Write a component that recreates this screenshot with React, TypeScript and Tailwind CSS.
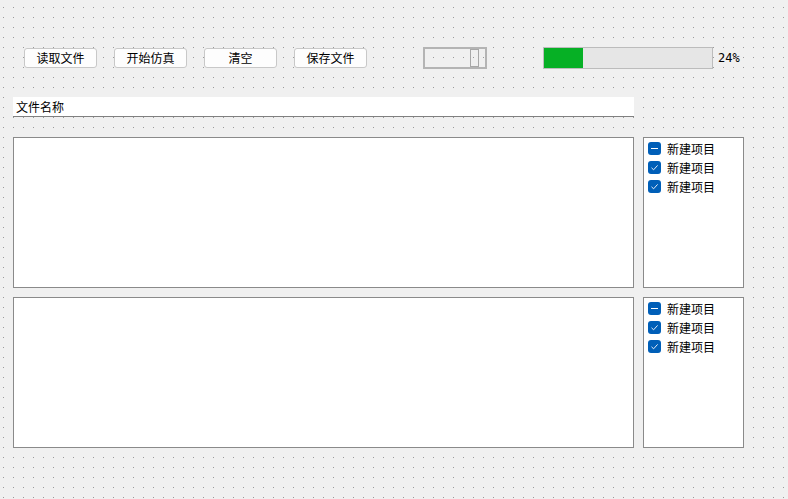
import React from 'react';

const font = { fontFamily: '"Noto Sans CJK SC", "Noto Sans", sans-serif' };

const buttons = ['读取文件', '开始仿真', '清空', '保存文件'];
const items = [
  { label: '新建项目', state: 'partial' },
  { label: '新建项目', state: 'checked' },
  { label: '新建项目', state: 'checked' },
];

const CheckBox: React.FC<{ state: string }> = ({ state }) => (
  <span className="w-[13px] h-[13px] rounded-[3px] bg-[#005fb8] flex items-center justify-center shrink-0">
    {state === 'partial' ? (
      <span className="w-[7px] h-[1px] bg-white" />
    ) : (
      <svg width="9" height="9" viewBox="0 0 9 9">
        <path d="M1.5 4.8 L3.6 6.8 L7.6 2.4" fill="none" stroke="#e8eef8" strokeWidth="1" />
      </svg>
    )}
  </span>
);

const ListPanel = () => (
  <div className="w-[101px] h-[151px] border border-[#8a8a8a] bg-white pt-[4px] pl-[4px] flex flex-col gap-[6px]">
    {items.map((it, i) => (
      <div key={i} className="flex items-center gap-[6px] h-[13px]">
        <CheckBox state={it.state} />
        <span className="text-[12px] leading-none text-black">{it.label}</span>
      </div>
    ))}
  </div>
);

export default function App() {
  return (
    <div
      style={font}
      className="w-[788px] h-[499px] bg-[#f0f0f0] bg-[radial-gradient(circle_at_3.5px_7.5px,#9a9a9a_0.6px,transparent_0.9px)] bg-[size:10px_10px] overflow-hidden"
    >
      <div className="flex items-center h-[22px] mt-[47px] pl-[24px]">
        <div className="flex gap-[17px]">
          {buttons.map((b) => (
            <button
              key={b}
              className="w-[73px] h-[20px] bg-[#fdfdfd] border border-[#c8c8c8] rounded-[3px] text-[12px] leading-none text-black flex items-center justify-center"
            >
              {b}
            </button>
          ))}
        </div>
        <div className="ml-[56px] w-[64px] h-[22px] border-2 border-[#b4b4b4] flex items-center justify-end pr-[6px]">
          <div className="w-[9px] h-[18px] border border-[#a8a8a8] bg-transparent" />
        </div>
        <div className="ml-[56px] w-[170px] h-[22px] border border-[#bcbcbc] bg-[#e6e6e6] flex">
          <div className="w-[39px] h-full bg-[#06b025]" />
        </div>
        <span className="ml-[5px] text-[12px] text-black leading-none" style={{ fontFamily: '"DejaVu Sans Mono", monospace' }}>
          24%
        </span>
      </div>

      <div className="mt-[28px] ml-[13px] w-[621px] h-[20px] bg-white border-b border-[#808080] flex items-center pl-[3px] text-[12px] text-black leading-none">
        文件名称
      </div>

      <div className="mt-[20px] ml-[13px] flex flex-col gap-[9px]">
        {[0, 1].map((r) => (
          <div key={r} className="flex gap-[9px]">
            <div className="w-[621px] h-[151px] border border-[#8a8a8a] bg-white" />
            <ListPanel />
          </div>
        ))}
      </div>
    </div>
  );
}
